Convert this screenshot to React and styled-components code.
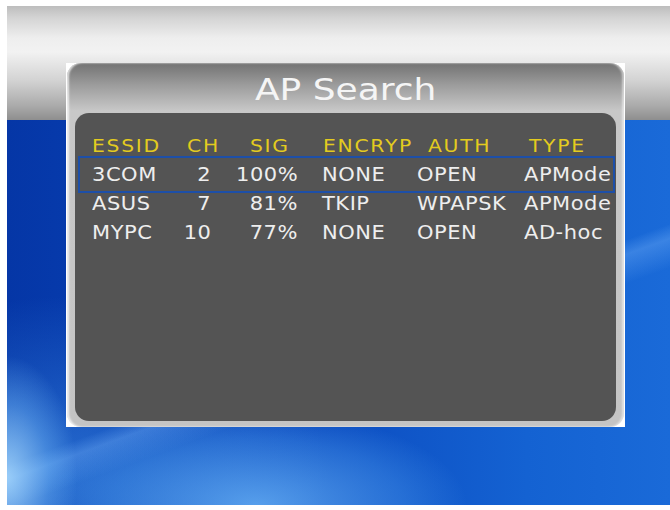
import React from "react";
import styled, { createGlobalStyle } from "styled-components";

const GlobalStyle = createGlobalStyle`
  html, body {
    margin: 0;
    padding: 0;
    background: #ffffff;
  }
  body {
    font-family: "DejaVu Sans", Verdana, sans-serif;
  }
`;

const Page = styled.div`
  width: 670px;
  height: 510px;
  padding: 6px 0 0 7px;
  box-sizing: border-box;
`;

const Screen = styled.div`
  width: 663px;
  height: 499px;
  padding: 57px 0 0 59px;
  box-sizing: border-box;
  background:
    linear-gradient(
        to bottom,
        #bdbdbd 0,
        #d4d4d4 12px,
        #eeeeee 32px,
        #f2f2f2 46px,
        #d2d2d2 75px,
        #aaaaaa 100px,
        #8e8e8e 114px
      )
      0 0 / 100% 114px no-repeat,
    radial-gradient(
        ellipse 70px 120px at 0 470px,
        rgba(170, 220, 255, 0.85),
        rgba(120, 190, 250, 0.4) 60%,
        transparent
      ),
    radial-gradient(
        ellipse 210px 95px at 250px 500px,
        rgba(110, 185, 250, 0.75),
        rgba(80, 160, 240, 0.35) 70%,
        transparent
      ),
    linear-gradient(
        160deg,
        transparent 62%,
        rgba(120, 180, 250, 0.35) 64%,
        transparent 68%
      ),
    radial-gradient(
        ellipse 260px 180px at 60px 470px,
        rgba(60, 140, 230, 0.6),
        transparent
      ),
    linear-gradient(
        90deg,
        #0536a6 0,
        #0a47bc 260px,
        #1462d2 520px,
        #1a6ad8 663px
      );
`;

const Dialog = styled.div`
  width: 559px;
  height: 364px;
  padding: 0 1px;
  box-sizing: border-box;
  background: #ffffff;
`;

const Panel = styled.div`
  height: 100%;
  border-radius: 14px;
  padding: 0 8px 6px 8px;
  box-sizing: border-box;
  display: flex;
  flex-direction: column;
  background: linear-gradient(
    to bottom,
    #727272 0,
    #9c9c9c 22px,
    #c8c8c8 48px,
    #c4c4c4 100%
  );
  box-shadow: inset 2px 0 2px rgba(255, 255, 255, 0.7),
    inset -2px 0 2px rgba(255, 255, 255, 0.5);
`;

const Title = styled.div`
  height: 50px;
  padding-top: 4px;
  box-sizing: border-box;
  line-height: 46px;
  text-align: center;
  font-size: 30px;
  color: #f5f5f5;
`;

/* the set-top box font is a wide face, so stretch the glyphs a little */
const Wide = styled.span`
  display: inline-block;
  transform: scaleX(${(p) => p.$k || 1});
  transform-origin: ${(p) => p.$origin || "center"};
`;

const ListPane = styled.div`
  flex: 1;
  background: #545454;
  border-radius: 14px;
  padding: 18px 1px 0 3px;
`;

const COLS = "102px 40px 85px 110px 100px 1fr";

const Row = styled.div`
  position: relative;
  display: grid;
  grid-template-columns: ${COLS};
  height: 29px;
  line-height: 29px;
  white-space: nowrap;
  font-size: ${(p) => (p.$head ? "18px" : "20px")};
  letter-spacing: ${(p) => (p.$head ? "1.5px" : "0.5px")};
  color: ${(p) => (p.$head ? "#e3cb1f" : "#eeeeee")};

  ${(p) =>
    p.$selected &&
    `
    &::before {
      content: "";
      position: absolute;
      left: 0;
      right: 0;
      top: -4px;
      bottom: -4px;
      border: 2px solid #1d4fa8;
    }
  `}
`;

const Cell = styled.span`
  text-align: ${(p) => p.$align || "left"};
  padding-left: ${(p) => p.$pl || 0}px;
  padding-right: ${(p) => p.$pr || 0}px;
`;

const headCols = [
  { key: "essid", label: "ESSID", pl: 14 },
  { key: "ch", label: "CH", pl: 7 },
  { key: "sig", label: "SIG", pl: 30 },
  { key: "enc", label: "ENCRYP", pl: 18 },
  { key: "auth", label: "AUTH", pl: 13 },
  { key: "type", label: "TYPE", pl: 14 },
];

const dataCols = [
  { key: "essid", pl: 14 },
  { key: "ch", align: "right", pr: 9 },
  { key: "sig", align: "right", pr: 7 },
  { key: "enc", pl: 17 },
  { key: "auth", pl: 2 },
  { key: "type", pl: 9 },
];

const networks = [
  { essid: "3COM", ch: "2", sig: "100%", enc: "NONE", auth: "OPEN", type: "APMode" },
  { essid: "ASUS", ch: "7", sig: "81%", enc: "TKIP", auth: "WPAPSK", type: "APMode" },
  { essid: "MYPC", ch: "10", sig: "77%", enc: "NONE", auth: "OPEN", type: "AD-hoc" },
];

export default function App() {
  return (
    <Page>
      <GlobalStyle />
      <Screen>
        <Dialog>
          <Panel>
            <Title>
              <Wide $k={1.2}>AP Search</Wide>
            </Title>
            <ListPane>
              <Row $head>
                {headCols.map((c) => (
                  <Cell key={c.key} $pl={c.pl}>
                    <Wide $k={1.13} $origin="left">
                      {c.label}
                    </Wide>
                  </Cell>
                ))}
              </Row>
              {networks.map((n, i) => (
                <Row key={n.essid} $selected={i === 0}>
                  {dataCols.map((c) => (
                    <Cell key={c.key} $align={c.align} $pl={c.pl} $pr={c.pr}>
                      <Wide
                        $k={1.05}
                        $origin={c.align === "right" ? "right" : "left"}
                      >
                        {n[c.key]}
                      </Wide>
                    </Cell>
                  ))}
                </Row>
              ))}
            </ListPane>
          </Panel>
        </Dialog>
      </Screen>
    </Page>
  );
}
